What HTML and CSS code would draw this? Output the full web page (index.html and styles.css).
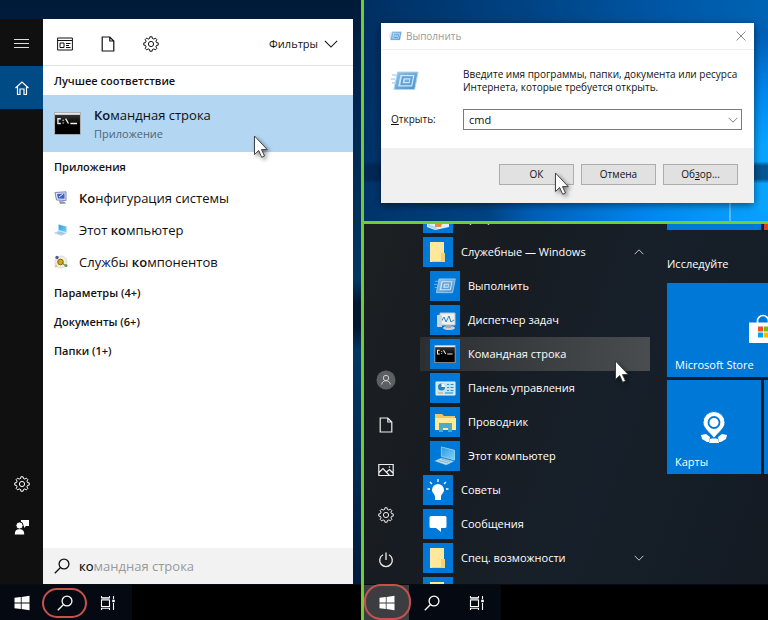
FILE: index.html
```html
<!DOCTYPE html>
<html lang="ru">
<head>
<meta charset="utf-8">
<meta name="viewport" content="width=device-width, initial-scale=1">
<title>Командная строка</title>
<link rel="stylesheet" href="styles.css">
</head>
<body>
<svg class="sprite" aria-hidden="true">
  <defs>
    <linearGradient id="g-run" x1="0" y1="0" x2="1" y2="1"><stop offset="0" stop-color="#8fc3ea"/><stop offset="1" stop-color="#4d8fc9"/></linearGradient>
    <linearGradient id="g-cmd" x1="0" y1="0" x2="0" y2="1"><stop offset="0" stop-color="#333"/><stop offset=".5" stop-color="#000"/></linearGradient>
    <linearGradient id="g-screen" x1="0" y1="0" x2="1" y2="1"><stop offset="0" stop-color="#2d9ade"/><stop offset="1" stop-color="#7fd4f7"/></linearGradient>
  </defs>
  <symbol id="gear" viewBox="0 0 16 16"><path fill="none" stroke="currentColor" stroke-linejoin="round" d="M13.53 6.62 15.21 6.86V9.14L13.53 9.38 12.89 10.94 13.91 12.29 12.29 13.91 10.94 12.89 9.38 13.53 9.14 15.21H6.86L6.62 13.53 5.06 12.89 3.71 13.91 2.09 12.29 3.11 10.94 2.47 9.38.79 9.14V6.86L2.47 6.62 3.11 5.06 2.09 3.71 3.71 2.09 5.06 3.11 6.62 2.47 6.86.79H9.14L9.38 2.47 10.94 3.11 12.29 2.09 13.91 3.71 12.89 5.06Z"/><circle cx="8" cy="8" r="2.6" fill="none" stroke="currentColor"/></symbol>
  <symbol id="page" viewBox="0 0 16 16"><path fill="none" stroke="currentColor" stroke-width="1.2" d="M2.2 1h7.6l4 4v10H2.2ZM9.8 1v4h4"/></symbol>
  <symbol id="lens" viewBox="0 0 16 16"><g fill="none" stroke="currentColor" stroke-width="1.3"><circle cx="10" cy="6" r="4.9"/><path d="M6.5 9.5.8 15.2"/></g></symbol>
  <symbol id="windows" viewBox="0 0 16 16"><path fill="currentColor" d="M.5 2.8 6.8 2v5.6H.5ZM7.6 1.9 15.5.8v6.8H7.6ZM.5 8.4h6.3V14l-6.3-.8ZM7.6 8.4h7.9v6.8l-7.9-1.1Z"/></symbol>
  <symbol id="taskview" viewBox="0 0 16 16"><g fill="none" stroke="currentColor" stroke-width="1.1"><path d="M1.5 5h8v6.5h-8ZM1.5 1v1.8h8V1M1.5 15v-1.8h8V15M13.5 1v3.2M13.5 8v7"/></g><path fill="currentColor" opacity=".6" d="M1.5 2.6h8v2.2h-8z"/><path fill="currentColor" d="M12.2 4.8h2.6v2.4h-2.6z"/></symbol>
  <symbol id="down" viewBox="0 0 16 16"><path fill="none" stroke="currentColor" stroke-width="1.2" d="M1 4.5 8 11.5 15 4.5"/></symbol>
  <symbol id="cursor" viewBox="0 0 16 24"><path fill="#fff" stroke="#333" stroke-width=".9" d="M1.5 1v18.5l4.2-4 3 6.8 2.8-1.3-3-6.4h5.7Z"/></symbol>
  <symbol id="run" viewBox="0 0 28 20"><path fill="url(#g-run)" stroke="#aed5f1" d="M6.5 1h20.6l-3.5 17.5H3Z"/><path fill="#cfe6f8" d="M9.5 4h14L21.2 15.5H7.1Z"/><path fill="none" stroke="#5d9fd6" stroke-width="2" d="M11.800 6.200h9l-1.400 7h-9Z"/><path fill="#6facdb" d="M14 8.500h4.400l-.5 2.400h-4.400Z"/><path stroke="#8fc0e6" d="M1 4h4M0 8h4M1 12h3"/></symbol>
  <symbol id="cmd" viewBox="0 0 28 24"><path fill="#a8adb2" d="M0 0h28v24H0z"/><path fill="#e7eaec" d="M1 1h26v2H1z"/><path fill="url(#g-cmd)" d="M1 3h26v20H1z"/><path fill="none" stroke="#eee" stroke-width="1.4" d="M7 7H4v5h3M9.5 8v1M9.5 11v1M12 7l3 5M17 12h7"/></symbol>
  <symbol id="pc" viewBox="0 0 28 24"><path fill="url(#g-screen)" stroke="#b8e3fa" stroke-width=".8" d="m9 1 16 4v12L9 12.500Z"/><path fill="#c3e2f2" stroke="#77afd0" stroke-width=".6" d="m9 14.500 15 4-9 4.500L1 18Z"/><path stroke="#72a5c4" d="m6 17.500 11 3M9 16l11 3"/></symbol>
  <symbol id="folder" viewBox="0 0 28 28"><path fill="#ffe79c" d="M6 4h14v20H6z"/><path fill="#f4d272" d="M17 15h4v9H8v-1h9z"/></symbol>
</svg>

<main class="board">
  <section class="shot search-shot" aria-label="Поиск">
    <div class="search-area">
      <nav class="rail rail-left" aria-label="Меню поиска">
        <button class="rail-btn rail-menu" aria-label="Меню"><svg class="i16" viewBox="0 0 16 16"><path stroke="#ddd" d="M0 3.5h15M0 7.5h15M0 11.5h15"/></svg></button>
        <button class="rail-btn rail-home" aria-label="Главная"><svg class="i16" viewBox="0 0 16 16"><path fill="none" stroke="#fff" stroke-width="1.2" d="m1.500 8 6.500-6 6.500 6M3.500 6.500v8H6V9h4v5.500h2.500v-8"/></svg></button>
        <span class="fill"></span>
        <button class="rail-btn" aria-label="Параметры"><svg class="i16"><use href="#gear"/></svg></button>
        <button class="rail-btn" aria-label="Отзывы"><svg class="i16" viewBox="0 0 16 16"><path fill="#fff" d="M7 1h8v6h-3l-2 2V7H7z"/><circle cx="5.5" cy="6.5" r="3.6" fill="#fff" stroke="#111"/><path fill="#fff" d="M.8 15.500c0-4 1.700-5.300 4.700-5.300s4.700 1.300 4.700 5.300Z"/></svg></button>
      </nav>
      <div class="panel">
        <div class="tools">
          <button class="tool" aria-label="Приложения"><svg class="i16" viewBox="0 0 16 16"><path fill="none" stroke="currentColor" d="M.6 2h14.800v12H.6ZM.6 4.500h14.800M3 7h4v4.500H3ZM9 7.500h4.500M9 9.500h3M9 11.500h4.500"/></svg></button>
          <button class="tool" aria-label="Документы"><svg class="i16"><use href="#page"/></svg></button>
          <button class="tool" aria-label="Параметры"><svg class="i16"><use href="#gear"/></svg></button>
          <button class="filters">Фильтры <svg class="i14"><use href="#down"/></svg></button>
        </div>
        <h2 class="group">Лучшее соответствие</h2>
        <a class="best" href="#cmd-app">
          <svg class="best-icon"><use href="#cmd"/></svg>
          <span class="best-text"><span class="best-name"><b>Ко</b>мандная строка</span><span class="best-kind">Приложение</span></span>
          <svg class="pointer pointer-best" aria-hidden="true"><use href="#cursor"/></svg>
        </a>
        <h2 class="group">Приложения</h2>
        <ul class="results">
          <li><a class="result" href="#config"><svg class="i14" viewBox="0 0 14 14"><path fill="#dfe6f4" stroke="#7c88ad" d="M1 1.500 12 .8v8.700L2.500 9Z"/><path fill="#3f5fc8" d="m3 3 7.500-.5v5.300L4 7.500Z"/><path stroke="#e5edff" d="m5 6 4-3"/><path fill="#8d97b5" d="m5 10 5 .5 2.500 2L6 13Z"/></svg><span><b>Ко</b>нфигурация системы</span></a></li>
          <li><a class="result" href="#computer"><svg class="i14"><use href="#pc"/></svg><span>Этот <b>ко</b>мпьютер</span></a></li>
          <li><a class="result" href="#services"><svg class="i14" viewBox="0 0 14 14"><circle cx="7" cy="7" r="6" fill="#f2eddc" stroke="#ddd"/><circle cx="6.5" cy="7" r="2.800" fill="#d1a81b" stroke="#806817"/><circle cx="3" cy="2.500" r="1.700" fill="#5d5a99"/><path stroke="#806817" d="m8 8 4 3"/><circle cx="12" cy="10.500" r="1.500" fill="#54a455"/><circle cx="2" cy="11" r="1.500" fill="#d9cc95"/></svg><span>Службы <b>ко</b>мпонентов</span></a></li>
        </ul>
        <h2 class="group">Параметры (4+)</h2>
        <h2 class="group">Документы (6+)</h2>
        <h2 class="group">Папки (1+)</h2>
        <span class="fill"></span>
        <label class="search"><svg class="i16"><use href="#lens"/></svg><span class="search-field"><span class="hint" aria-hidden="true">командная строка</span><input class="search-input" type="text" value="ко" aria-label="Поиск"></span></label>
      </div>
    </div>
    <div class="taskbar">
      <div class="task-group">
        <button class="task" aria-label="Пуск"><svg class="i16"><use href="#windows"/></svg></button>
        <button class="task ringed" aria-label="Поиск"><svg class="i16"><use href="#lens"/></svg></button>
        <button class="task" aria-label="Представление задач"><svg class="i16"><use href="#taskview"/></svg></button>
      </div>
    </div>
  </section>

  <div class="side">
    <section class="shot run-shot" aria-label="Окно Выполнить">
      <form class="dialog">
        <header class="title"><svg class="title-icon"><use href="#run"/></svg><span class="title-text">Выполнить</span><button class="close" type="button" aria-label="Закрыть"><svg class="i10" viewBox="0 0 10 10"><path stroke="#888" d="m.5.5 9 9M9.500.5l-9 9"/></svg></button></header>
        <div class="dialog-body">
          <svg class="run-icon"><use href="#run"/></svg>
          <p class="message">Введите имя программы, папки, документа или ресурса Интернета, которые требуется открыть.</p>
          <label class="open-label" for="open"><u>О</u>ткрыть:</label>
          <div class="combo"><input class="combo-input" id="open" type="text" value="cmd"><button class="combo-btn" type="button" aria-label="Показать список"><svg class="i10"><use href="#down"/></svg></button></div>
        </div>
        <footer class="actions">
          <button class="action" type="button">ОК<svg class="pointer pointer-ok" aria-hidden="true"><use href="#cursor"/></svg></button>
          <button class="action" type="button">Отмена</button>
          <button class="action" type="button"><span>Об<u>з</u>ор...</span></button>
        </footer>
      </form>
    </section>

    <section class="shot start-shot" aria-label="Меню Пуск">
      <div class="start">
        <nav class="rail rail-start" aria-label="Быстрые ссылки">
          <button class="rail-btn" aria-label="Учётная запись"><svg class="avatar" viewBox="0 0 20 20"><circle cx="10" cy="10" r="9.500" fill="#5d6063"/><g fill="none" stroke="#ccc"><circle cx="10" cy="8" r="2.700"/><path d="M5.700 14.500c.3-5 8.300-5 8.600 0"/></g></svg></button>
          <button class="rail-btn" aria-label="Документы"><svg class="i16"><use href="#page"/></svg></button>
          <button class="rail-btn" aria-label="Изображения"><svg class="i16" viewBox="0 0 16 16"><path fill="none" stroke="currentColor" stroke-width="1.200" d="M.8 2.500h14.400v11H.8ZM1 10.500l4-4 6.500 7M8.500 10l3-2.500 3.500 3.500"/><circle cx="11.500" cy="5" r=".8" fill="currentColor"/></svg></button>
          <button class="rail-btn" aria-label="Параметры"><svg class="i16"><use href="#gear"/></svg></button>
          <button class="rail-btn" aria-label="Выключение"><svg class="i16" viewBox="0 0 16 16"><path fill="none" stroke="currentColor" stroke-width="1.300" d="M8 .5V8M5 2.700a6.300 6.300 0 1 0 6 0"/></svg></button>
        </nav>
        <ul class="apps">
          <li><a class="app" href="#programs"><svg class="app-icon" viewBox="0 0 30 30"><path fill="#e5edf2" d="M4 14h22v10l-14 3-8-3z"/><path fill="#e88941" d="M12 18h8l-2 6h-6z"/><path stroke="#b7d2e7" stroke-width="2" d="m5 22 9 4"/></svg>Программы</a></li>
          <li><a class="app" href="#system"><svg class="app-icon" viewBox="-1 -1 30 30"><use href="#folder" width="28" height="28"/></svg>Служебные — Windows<svg class="i10 more up"><use href="#down"/></svg></a></li>
          <li><a class="app nested" href="#run-app"><svg class="app-icon" viewBox="0 0 30 30"><use href="#run" x="4" y="7" width="22" height="16"/></svg>Выполнить</a></li>
          <li><a class="app nested" href="#tasks"><svg class="app-icon" viewBox="0 0 30 30"><path fill="#edf1f3" stroke="#b8c4ca" d="M10 8h15v12H10z"/><path fill="none" stroke="#2985b9" d="m11 17 3-5 2 5 3-6 2 6 3-2"/><path fill="#cbd6dc" d="M7 10h5v12H7z"/><ellipse cx="19" cy="23" rx="6" ry="2" fill="#cbd1d5"/><path fill="#9eabb3" d="M16 20h5v3h-5z"/></svg>Диспетчер задач</a></li>
          <li><a class="app nested current" id="cmd-app" href="#cmd-app"><svg class="app-icon" viewBox="0 0 30 30"><use href="#cmd" x="4" y="6" width="22" height="18"/></svg>Командная строка<svg class="pointer pointer-app" aria-hidden="true"><use href="#cursor"/></svg></a></li>
          <li><a class="app nested" href="#panel"><svg class="app-icon" viewBox="0 0 30 30"><path fill="#bfe6fb" stroke="#e3f5ff" d="M6 9h19v13H6z"/><circle cx="11.500" cy="14" r="3.500" fill="#2883bd"/><path fill="#fff" d="M11.500 14v-3.500A3.500 3.500 0 0 1 15 14z"/><path stroke="#3f91be" d="M17 11.500h2M20.500 11.500h3M17 14.500h2M20.500 14.500h3M17 17.500h2M20.500 17.500h3"/><path stroke="#e99b4a" d="M8 20h5"/><path stroke="#2883bd" d="M15 20h8"/></svg>Панель управления</a></li>
          <li><a class="app nested" href="#explorer"><svg class="app-icon" viewBox="0 0 30 30"><path fill="#efc75c" d="M5 7h7l2 2h11v14H5z"/><path fill="#ffe99b" d="M5 11h21v12H5z"/><path fill="#4dabc7" d="M9 16h13v9h-4v-4h-5v4H9z"/></svg>Проводник</a></li>
          <li><a class="app nested" id="computer" href="#computer"><svg class="app-icon" viewBox="0 0 30 30"><use href="#pc" x="4" y="5" width="23" height="20"/></svg>Этот компьютер</a></li>
          <li><a class="app" href="#tips"><svg class="app-icon" viewBox="0 0 30 30"><path fill="#fff" d="M15 9a6 6 0 0 0-6 6c0 3 3 4 3 7v3h6v-3c0-3 3-4 3-7a6 6 0 0 0-6-6Z"/><path stroke="#fff" stroke-width="1.400" d="M15 4v3M7 7l2 2M23 7l-2 2M4.500 14H7M23 14h2.500"/></svg>Советы</a></li>
          <li><a class="app" href="#messages"><svg class="app-icon" viewBox="0 0 30 30"><path fill="#fff" d="M8 7h14q1.500 0 1.500 1.500v9Q23.500 19 22 19h-4v4l-5-4H8q-1.500 0-1.500-1.500v-9Q6.500 7 8 7Z"/></svg>Сообщения</a></li>
          <li><a class="app" href="#access"><svg class="app-icon" viewBox="-1 -1 30 30"><use href="#folder" width="28" height="28"/></svg>Спец. возможности<svg class="i10 more"><use href="#down"/></svg></a></li>
          <li><a class="app" href="#standard" aria-label="Стандартные"><svg class="app-icon" viewBox="-1 -1 30 30"><use href="#folder" width="28" height="28"/></svg></a></li>
        </ul>
        <div class="tiles">
          <div class="tile-row tile-row-top"><span class="tile"></span><span class="tile tile-red"></span></div>
          <h2 class="tiles-title">Исследуйте</h2>
          <div class="tile-row"><a class="tile tile-wide" href="#store"><svg class="bag" viewBox="0 0 28 30"><path fill="none" stroke="#fff" stroke-width="1.600" d="M8.500 9V7a5.500 5.500 0 0 1 11 0v2"/><path fill="#fff" d="M0 8.500h28V29H0z"/><path fill="#f25022" d="M9 12.500h5v5H9z"/><path fill="#7fba00" d="M15 12.500h5v5h-5z"/><path fill="#00a4ef" d="M9 18.500h5v5H9z"/><path fill="#ffb900" d="M15 18.500h5v5h-5z"/></svg><span class="tile-name">Microsoft Store</span></a></div>
          <div class="tile-row"><a class="tile" href="#maps"><svg class="pin" viewBox="0 0 28 32"><path fill="#fff" d="m1 24 5-1 4 3-1 5H7l-5-3Zm26 0-5-1-4 3 1 5h2l5-3ZM10 28l4-1 4 1 1 4H9Z"/><path fill="#fff" stroke="#0078d7" d="M14 .5A11 11 0 0 0 3 11.500c0 6 7 10 11 16 4-6 11-10 11-16a11 11 0 0 0-11-11Z"/><circle cx="14" cy="11.500" r="5.500" fill="#fff" stroke="#0078d7" stroke-width="1.800"/></svg><span class="tile-name">Карты</span></a><span class="tile"></span></div>
        </div>
      </div>
      <div class="taskbar">
        <div class="task-group task-wide">
          <button class="task ringed pressed" aria-label="Пуск"><svg class="i16"><use href="#windows"/></svg></button>
          <button class="task" aria-label="Поиск"><svg class="i16"><use href="#lens"/></svg></button>
          <button class="task" aria-label="Представление задач"><svg class="i16"><use href="#taskview"/></svg></button>
        </div>
      </div>
    </section>
  </div>
</main>
</body>
</html>
```

FILE: styles.css
```css
* { box-sizing: border-box; }
body { margin: 0; font-family: "Open Sans", "Noto Sans", sans-serif; font-size: 11px; line-height: 16px; color: #111; }
button, input { font: inherit; color: inherit; }
button { padding: 0; border: 0; background: none; display: flex; align-items: center; justify-content: center; }
h2, p, ul { margin: 0; padding: 0; }
ul { list-style: none; }
a { color: inherit; text-decoration: none; }
svg { display: block; flex: none; }
.sprite { position: absolute; width: 0; height: 0; }
.i16 { width: 16px; height: 16px; }
.i14 { width: 14px; height: 14px; }
.i10 { width: 10px; height: 10px; }
.fill { flex: 1; }

.board { display: grid; grid-template-columns: 361fr 404fr; gap: 3px; min-height: 100vh; background: #70cd35; }
.side { display: grid; grid-template-rows: auto 1fr; gap: 3px; min-width: 0; }
.shot { display: flex; flex-direction: column; min-width: 0; overflow: hidden; }

/* Taskbar */
.taskbar { display: flex; height: 36px; background: #000; border-top: 1px solid #070b12; }
.task-group { display: flex; padding-right: 3px; background: #050a12; color: #fff; }
.task { width: 43px; position: relative; }
.task-wide { padding-right: 2px; }
.task-wide .task { width: 45px; }
.pressed { background: #3b3d40; }
.ringed::after { content: ""; position: absolute; inset: 3px -1px 2px; border: 2px solid #c8504f; border-radius: 15px; }
.ringed.pressed::after { inset: -1px -2px 0 0; border-radius: 17px; }

/* Rails */
.rail { display: flex; flex-direction: column; width: 43px; flex: none; color: #fff; }
.rail-btn { height: 43px; }
.rail-left { background: #101010; padding-bottom: 36px; }
.rail-menu { height: 47px; padding-top: 3px; }
.rail-home { background: #004a86; }

/* Search panel */
.search-shot { background: #001a38; }
.search-area { flex: 1; display: flex; padding: 19px 8px 0 0; background: linear-gradient(180deg, #001a38, #00224a 10%, #003765 48%, #001730 52% 56%, #003765 60%, #002a55 80%, #001b3d); }
.panel { flex: 1; display: flex; flex-direction: column; min-width: 0; background: #fff; }
.tools { display: flex; align-items: center; height: 47px; padding: 3px 15px 0 0; border-bottom: 1px solid #e2e2e2; }
.tool { width: 43px; height: 43px; }
.filters { margin-left: auto; gap: 6px; }
.group { height: 29px; padding: 0 11px; font-size: 11px; line-height: 29px; font-weight: 600; }
.best { position: relative; display: flex; align-items: center; gap: 13px; height: 57px; padding: 0 11px; background: #b3d6f2; }
.best-icon { width: 27px; height: 23px; }
.best-text { display: flex; flex-direction: column; }
.best-name { font-size: 13px; line-height: 20px; }
.best-kind { line-height: 18px; color: #4f6577; }
b { font-weight: 600; }
.results { padding-top: 1px; }
.result { display: flex; align-items: center; gap: 11px; height: 32px; padding: 0 11px; font-size: 13px; }
.search { display: flex; align-items: center; gap: 9px; height: 36px; padding: 0 11px; background: #f2f2f2; font-size: 13px; }
.search-field { flex: 1; display: grid; align-items: center; }
.search-field > * { grid-area: 1 / 1; }
.hint { color: #999; }
.search-input { width: 100%; padding: 0; border: 0; outline: 0; background: none; }

/* Pointer */
.pointer { position: absolute; width: 16px; height: 24px; filter: drop-shadow(2px 2px 2px #0007); z-index: 1; }
.pointer-best { right: 84px; bottom: -7px; }
.pointer-ok { left: 54px; top: 7px; }
.pointer-app { right: 20px; bottom: -13px; }

/* Run dialog */
.run-shot {
  padding: 23px 14px 18px 17px;
  background:
    linear-gradient(90deg, #0000 365px, #a8dcff 366px, #0000 367px) 0 100% / 100% 18px no-repeat,
    linear-gradient(180deg, #0000 73%, #00204899 75% 81%, #0000 83%),
    radial-gradient(ellipse 75% 75% at 104% 80%, #0aa4ff 20%, #0088f0 50%, #0060b8 85%, #0000),
    linear-gradient(100deg, #002f62, #00488c 45%, #0058a8 70%, #0068b8);
}
.dialog { background: #fff; box-shadow: 0 2px 8px #0008; font-size: 10px; line-height: 13px; }
.title { display: flex; align-items: center; gap: 4px; height: 27px; padding: 0 8px; border-bottom: 1px solid #f0f0f0; color: #999; }
.title-icon { width: 13px; height: 10px; }
.close { margin-left: auto; }
.dialog-body { display: grid; grid-template-columns: 72px 1fr; align-items: center; row-gap: 15px; padding: 18px 12px 18px 10px; }
.run-icon { width: 28px; height: 20px; }
.message { margin-right: -8px; }
.combo { display: flex; height: 21px; border: 1px solid #7a7a7a; font-size: 11px; }
.combo-input { flex: 1; min-width: 0; padding: 0 5px; border: 0; outline: 0; background: none; }
.combo-btn { width: 16px; color: #555; }
.actions { display: flex; justify-content: flex-end; gap: 7px; padding: 16px 16px 18px; background: #f0f0f0; }
.action { position: relative; width: 75px; height: 21px; background: #e1e1e1; border: 1px solid #adadad; }

/* Start menu */
.start-shot { background: #151a20; color: #fff; }
.start { flex: 1 1 0; min-height: 0; display: flex; overflow: hidden; background: linear-gradient(110deg, #1c2022, #171c22 30%, #17202a 60%, #131a22); }
.rail-start { justify-content: flex-end; padding-bottom: 2px; color: #eee; }
.rail-start .rail-btn { height: 45px; }
.avatar { width: 20px; height: 20px; }
.apps { flex: 0 1 230px; min-width: 0; margin: -23px 17px 0 13px; }
.app { position: relative; display: flex; align-items: center; gap: 8px; height: 34px; padding: 0 6px 0 3px; white-space: nowrap; }
.nested { padding-left: 10px; }
.current { background: linear-gradient(90deg, #2c2f32, #4a4d50); }
.app-icon { width: 30px; height: 30px; background: #0078d7; }
.more { margin-left: auto; }
.up { transform: scaleY(-1); }
.tiles { flex: 1; min-width: 0; overflow: hidden; display: flex; flex-direction: column; gap: 3px; }
.tile-row { display: flex; gap: 3px; }
.tile { position: relative; flex: none; display: flex; flex-direction: column; align-items: center; width: 94px; height: 94px; background: #0078d7; }
.tile-row-top .tile { height: 6px; }
.tile-row-top .tile-red { background: #d8401e; }
.tile-wide { width: 191px; }
.tiles-title { height: 47px; padding-top: 15px; line-height: 32px; font-size: 11px; font-weight: 400; }
.bag { width: 28px; height: 30px; margin-top: 31px; }
.pin { width: 28px; height: 32px; margin-top: 31px; }
.tile-name { position: absolute; left: 8px; bottom: 4px; font-size: 11px; }
```
